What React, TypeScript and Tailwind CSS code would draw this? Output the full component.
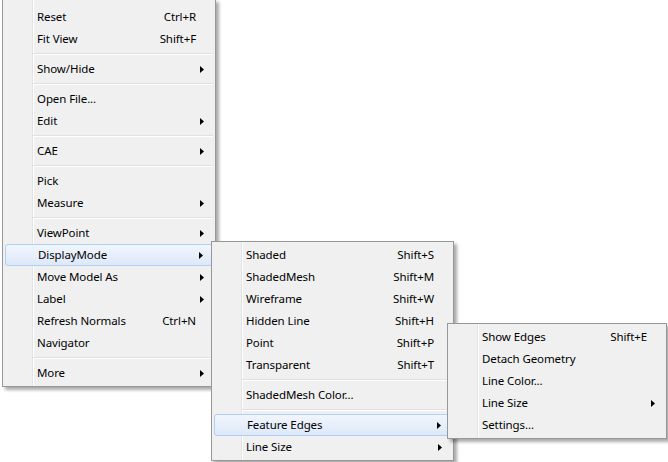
import React from "react";

type Entry =
  | { label: string; shortcut?: string; sub?: boolean; active?: boolean }
  | { sep: true };

const mainItems: Entry[] = [
  { label: "Reset", shortcut: "Ctrl+R" },
  { label: "Fit View", shortcut: "Shift+F" },
  { sep: true },
  { label: "Show/Hide", sub: true },
  { sep: true },
  { label: "Open File..." },
  { label: "Edit", sub: true },
  { sep: true },
  { label: "CAE", sub: true },
  { sep: true },
  { label: "Pick" },
  { label: "Measure", sub: true },
  { sep: true },
  { label: "ViewPoint", sub: true },
  { label: "DisplayMode", sub: true, active: true },
  { label: "Move Model As", sub: true },
  { label: "Label", sub: true },
  { label: "Refresh Normals", shortcut: "Ctrl+N" },
  { label: "Navigator" },
  { sep: true },
  { label: "More", sub: true },
];

const displayItems: Entry[] = [
  { label: "Shaded", shortcut: "Shift+S" },
  { label: "ShadedMesh", shortcut: "Shift+M" },
  { label: "Wireframe", shortcut: "Shift+W" },
  { label: "Hidden Line", shortcut: "Shift+H" },
  { label: "Point", shortcut: "Shift+P" },
  { label: "Transparent", shortcut: "Shift+T" },
  { sep: true },
  { label: "ShadedMesh Color..." },
  { sep: true },
  { label: "Feature Edges", sub: true, active: true },
  { label: "Line Size", sub: true },
];

const edgeItems: Entry[] = [
  { label: "Show Edges", shortcut: "Shift+E" },
  { label: "Detach Geometry" },
  { label: "Line Color..." },
  { label: "Line Size", sub: true },
  { label: "Settings..." },
];

function Arrow() {
  return (
    <svg width="4" height="7" viewBox="0 0 4 7" className="block">
      <polygon points="0,0 4,3.5 0,7" fill="#000" />
    </svg>
  );
}

function Menu({ items, className }: { items: Entry[]; className: string }) {
  return (
    <div
      className={`absolute border border-[#979797] px-[2px] pb-[2px] shadow-[3px_3px_3px_rgba(0,0,0,0.33)] bg-[linear-gradient(to_right,#f0f0f0_29px,#e2e3e3_29px,#e2e3e3_30px,#ffffff_30px,#ffffff_31px,#f0f0f0_31px)] ${className}`}
    >
      {items.map((it, i) =>
        "sep" in it ? (
          <div key={i} className="h-[8px] flex items-center pl-[28px]">
            <div className="h-[2px] w-full border-t border-[#e0e0e0] border-b border-b-white" />
          </div>
        ) : (
          <div
            key={i}
            className={`h-[22px] flex items-center pl-[32px] rounded-[3px] ${
              it.active
                ? "border border-[#aecff7] bg-[linear-gradient(to_bottom,#f1f6fd,#dde8f8)] pl-[31px]"
                : ""
            }`}
          >
            <span className="flex-1 whitespace-nowrap">{it.label}</span>
            {it.shortcut && <span className="whitespace-nowrap">{it.shortcut}</span>}
            <span className="w-[17px] flex items-center pl-[4px] shrink-0">{it.sub && <Arrow />}</span>
          </div>
        )
      )}
    </div>
  );
}

export default function App() {
  return (
    <div className="relative w-[668px] h-[462px] overflow-hidden bg-white text-black font-['Noto_Sans',sans-serif] text-[11.5px] tracking-[-0.1px] leading-none">
      <Menu items={mainItems} className="left-[2px] top-[-1px] w-[214px] pt-[6px]" />
      <Menu items={displayItems} className="left-[211px] top-[241px] w-[243px] pt-[2px]" />
      <Menu items={edgeItems} className="left-[447px] top-[323px] w-[220px] pt-[2px]" />
    </div>
  );
}
